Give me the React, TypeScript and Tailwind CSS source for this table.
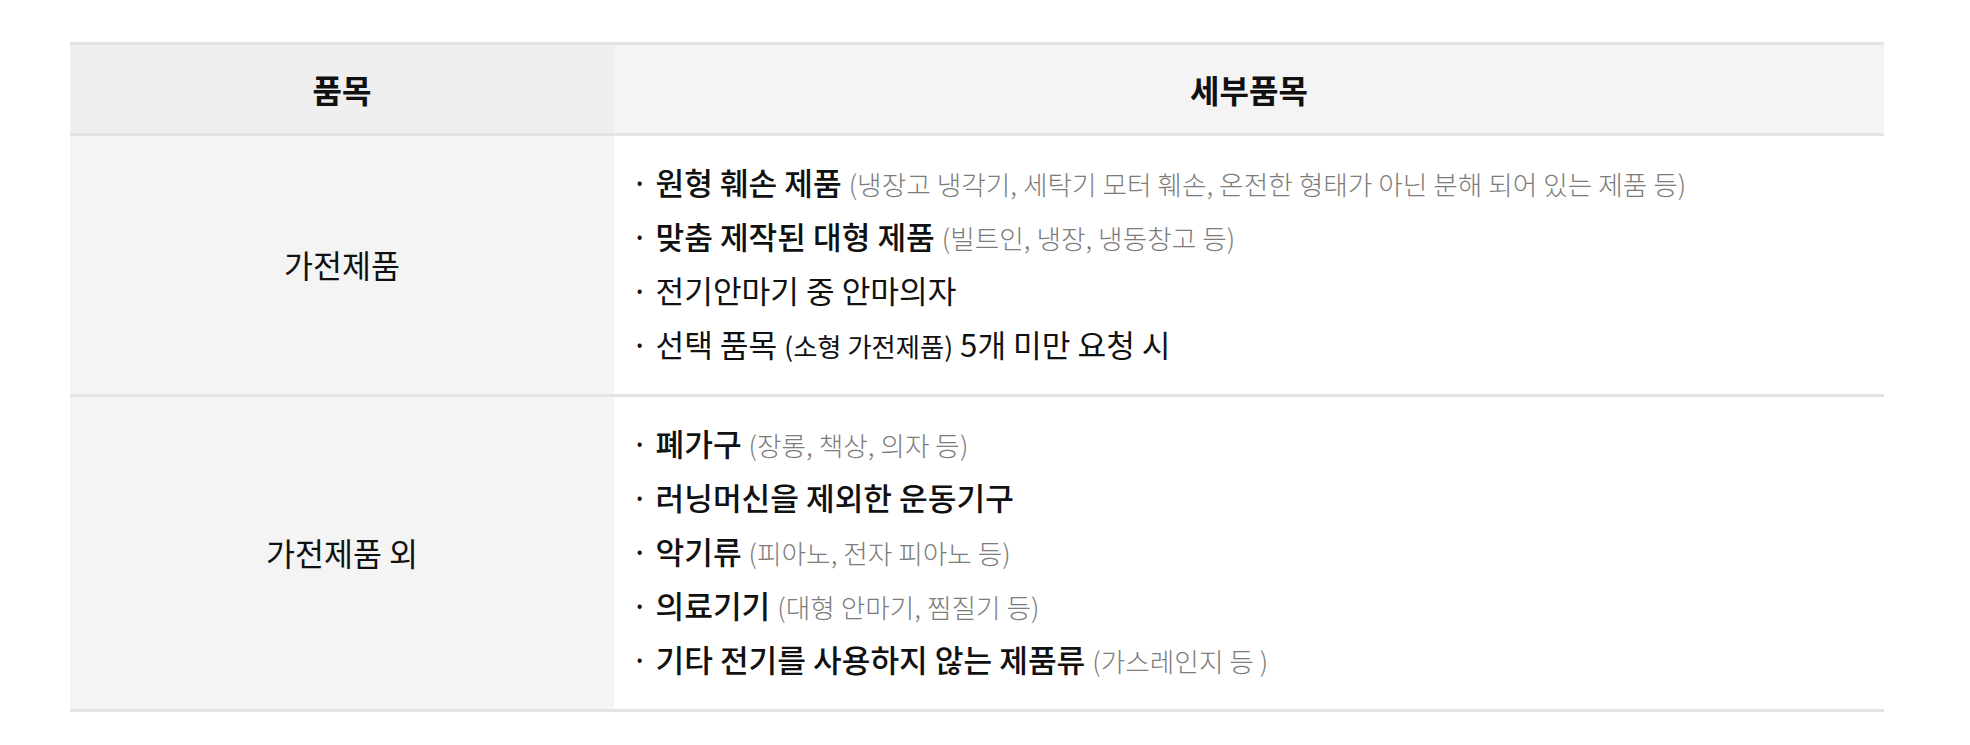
import React from "react";

type Item = { main: string; sub?: string; mainWeight?: "medium" | "regular"; tail?: string; small?: string };

const row1: Item[] = [
  { main: "원형 훼손 제품", sub: "(냉장고 냉각기, 세탁기 모터 훼손, 온전한 형태가 아닌 분해 되어 있는 제품 등)" },
  { main: "맞춤 제작된 대형 제품", sub: "(빌트인, 냉장, 냉동창고 등)" },
  { main: "전기안마기 중 안마의자", mainWeight: "regular" },
  { main: "선택 품목", mainWeight: "regular", small: "(소형 가전제품)", tail: "5개 미만 요청 시" },
];

const row2: Item[] = [
  { main: "폐가구", sub: "(장롱, 책상, 의자 등)" },
  { main: "러닝머신을 제외한 운동기구" },
  { main: "악기류", sub: "(피아노, 전자 피아노 등)" },
  { main: "의료기기", sub: "(대형 안마기, 찜질기 등)" },
  { main: "기타 전기를 사용하지 않는 제품류", sub: "(가스레인지 등 )" },
];

function Line({ it }: { it: Item }) {
  const w = it.mainWeight === "regular" ? "font-normal" : "font-[450]";
  return (
    <li className="h-[54px] leading-[54px] whitespace-nowrap">
      <span className="font-normal">·</span>{" "}
      <span className={w}>{it.main}</span>
      {it.sub && (
        <>
          {" "}
          <span className="text-[26.7px] leading-none font-extralight text-[#7c7c7c]">{it.sub}</span>
        </>
      )}
      {it.small && (
        <>
          {" "}
          <span className="text-[26.3px] leading-none font-normal">{it.small}</span>
        </>
      )}
      {it.tail && (
        <>
          {" "}
          <span className="font-normal">{it.tail}</span>
        </>
      )}
    </li>
  );
}

function Row({ label, items }: { label: string; items: Item[] }) {
  return (
    <div className="flex border-b-[3px] border-[#e3e3e3]">
      <div className="w-[544px] shrink-0 bg-[#f4f4f4] flex items-center justify-center text-[31.5px] text-[#111]">
        {label}
      </div>
      <ul className="flex-1 bg-white pt-[19px] pb-[23px] pl-[17px] text-[31.2px] text-[#111]">
        {items.map((it, i) => (
          <Line key={i} it={it} />
        ))}
      </ul>
    </div>
  );
}

export default function App() {
  return (
    <div
      className="w-[1970px] h-[745px] bg-white pt-[42px]"
      style={{ fontFamily: '"Noto Sans CJK KR", "Noto Sans", sans-serif' }}
    >
      <div className="ml-[70px] w-[1814px] border-t-[3px] border-[#e3e3e3]">
        <div className="flex h-[91px] border-b-[3px] border-[#e3e3e3] text-[32px] font-bold text-[#111]">
          <div className="w-[544px] shrink-0 bg-[#efefef] flex items-center justify-center">품목</div>
          <div className="flex-1 bg-[#f4f4f4] flex items-center justify-center">세부품목</div>
        </div>
        <Row label="가전제품" items={row1} />
        <Row label="가전제품 외" items={row2} />
      </div>
    </div>
  );
}
